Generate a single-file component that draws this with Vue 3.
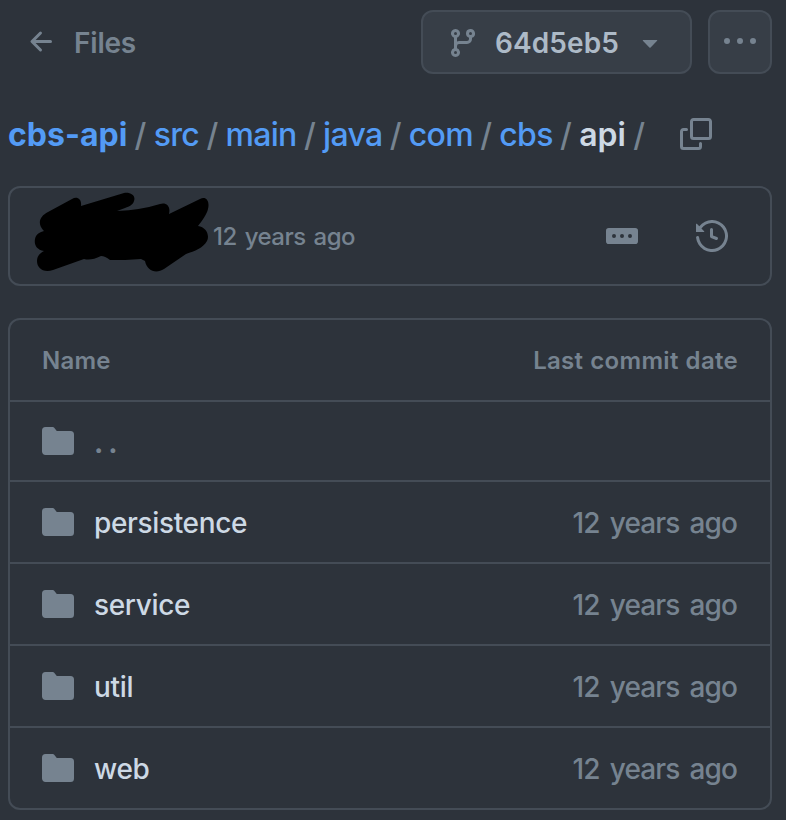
<script setup>
const crumbs = [
  { name: 'cbs-api', kind: 'root' },
  { name: 'src', kind: 'link' },
  { name: 'main', kind: 'link' },
  { name: 'java', kind: 'link' },
  { name: 'com', kind: 'link' },
  { name: 'cbs', kind: 'link' },
  { name: 'api', kind: 'current' },
]

const folders = [
  { name: 'persistence', date: '12 years ago' },
  { name: 'service', date: '12 years ago' },
  { name: 'util', date: '12 years ago' },
  { name: 'web', date: '12 years ago' },
]

const folderPath =
  'M1.75 1A1.75 1.75 0 0 0 0 2.75v10.5C0 14.216.784 15 1.75 15h12.5A1.75 1.75 0 0 0 16 13.25v-8.5A1.75 1.75 0 0 0 14.25 3H7.5a.25.25 0 0 1-.2-.1l-.9-1.2C6.07 1.26 5.55 1 5 1H1.75Z'
</script>

<template>
  <main class="page">
    <header class="topbar">
      <a class="files">
        <svg class="icon" viewBox="0 0 16 16"><path d="M7.78 12.53a.75.75 0 0 1-1.06 0L2.47 8.28a.75.75 0 0 1 0-1.06l4.25-4.25a.751.751 0 0 1 1.042.018.751.751 0 0 1 .018 1.042L4.81 7h7.44a.75.75 0 0 1 0 1.5H4.81l2.97 2.97a.75.75 0 0 1 0 1.06Z" /></svg>
        <span class="files-label">Files</span>
      </a>
      <button class="btn branch">
        <svg class="icon branch-icon" viewBox="0 0 16 16"><path d="M9.5 3.25a2.25 2.25 0 1 1 3 2.122V6A2.5 2.5 0 0 1 10 8.5H6a1 1 0 0 0-1 1v1.128a2.251 2.251 0 1 1-1.5 0V5.372a2.25 2.25 0 1 1 1.5 0v1.836A2.493 2.493 0 0 1 6 7h4a1 1 0 0 0 1-1v-.628A2.25 2.25 0 0 1 9.5 3.25Zm-6 0a.75.75 0 1 0 1.5 0 .75.75 0 0 0-1.5 0Zm8.25-.75a.75.75 0 1 0 0 1.5.75.75 0 0 0 0-1.5ZM4.25 12a.75.75 0 1 0 0 1.5.75.75 0 0 0 0-1.5Z" /></svg>
        <span class="sha">64d5eb5</span>
        <svg class="icon" viewBox="0 0 16 16"><path d="m4.427 7.427 3.396 3.396a.25.25 0 0 0 .354 0l3.396-3.396A.25.25 0 0 0 11.396 7H4.604a.25.25 0 0 0-.177.427Z" /></svg>
      </button>
      <button class="btn more">
        <svg class="icon" viewBox="0 0 16 16"><path d="M8 9a1.5 1.5 0 1 0 0-3 1.5 1.5 0 0 0 0 3ZM1.5 9a1.5 1.5 0 1 0 0-3 1.5 1.5 0 0 0 0 3Zm13 0a1.5 1.5 0 1 0 0-3 1.5 1.5 0 0 0 0 3Z" /></svg>
      </button>
    </header>

    <nav class="crumbs">
      <template v-for="c in crumbs" :key="c.name">
        <span class="crumb" :class="c.kind">{{ c.name }}</span>
        <span class="sep">/</span>
      </template>
      <svg class="icon copy" viewBox="0 0 16 16">
        <path d="M0 6.75C0 5.784.784 5 1.75 5h1.5a.75.75 0 0 1 0 1.5h-1.5a.25.25 0 0 0-.25.25v7.5c0 .138.112.25.25.25h7.5a.25.25 0 0 0 .25-.25v-1.5a.75.75 0 0 1 1.5 0v1.5A1.75 1.75 0 0 1 9.25 16h-7.5A1.75 1.75 0 0 1 0 14.25Z" />
        <path d="M5 1.75C5 .784 5.784 0 6.75 0h7.5C15.216 0 16 .784 16 1.75v7.5A1.75 1.75 0 0 1 14.25 11h-7.5A1.75 1.75 0 0 1 5 9.25Zm1.75-.25a.25.25 0 0 0-.25.25v7.5c0 .138.112.25.25.25h7.5a.25.25 0 0 0 .25-.25v-7.5a.25.25 0 0 0-.25-.25Z" />
      </svg>
    </nav>

    <section class="commit">
      <svg class="scribble" viewBox="0 0 180 90">
        <path d="M14 36 C8 29 11 22 19 18 L43 5 C48 2 53 5 52 12 L95 -1 C102 -2 107 2 105 7 C104 11 99 13 96 14 L88 17 Q112 16 131 10 C137 8 142 12 140 20 L171 5 C177 2 181 7 179 15 C178 20 173 27 169 32 C177 33 181 41 178 47 C174 54 166 57 157 60 L135 75 C127 80 118 77 116 67 L112 65 C102 66 90 66 81 66 Q76 62 72 62 Q62 67 55 65 L24 76 C14 79 8 74 8 67 C8 62 11 59 15 57 C7 56 5 50 6 45 C7 40 11 38 15 37Z" />
      </svg>
      <span class="when">12 years ago</span>
      <svg class="icon ellipsis" viewBox="0 0 16 16"><path d="M0 5.4A1.4 1.4 0 0 1 1.4 4h13.2A1.4 1.4 0 0 1 16 5.4v5.2a1.4 1.4 0 0 1-1.4 1.4H1.4A1.4 1.4 0 0 1 0 10.6ZM12 7a1 1 0 1 0 0 2 1 1 0 0 0 0-2ZM7 8a1 1 0 1 0 2 0 1 1 0 0 0-2 0ZM4 7a1 1 0 1 0 0 2 1 1 0 0 0 0-2Z" /></svg>
      <svg class="icon" viewBox="0 0 16 16"><path d="m.427 1.927 1.215 1.215a8.002 8.002 0 1 1-1.6 5.685.75.75 0 1 1 1.493-.154 6.5 6.5 0 1 0 1.18-4.458l1.358 1.358A.25.25 0 0 1 3.896 6H.25A.25.25 0 0 1 0 5.75V2.104a.25.25 0 0 1 .427-.177ZM7.75 4a.75.75 0 0 1 .75.75v2.992l2.028.812a.75.75 0 0 1-.557 1.392l-2.5-1A.751.751 0 0 1 7 8.25v-3.5A.75.75 0 0 1 7.75 4Z" /></svg>
    </section>

    <section class="table">
      <div class="row head">
        <span class="head-name">Name</span>
        <span class="head-date">Last commit date</span>
      </div>
      <div class="row parent">
        <svg class="icon" viewBox="0 0 16 16"><path :d="folderPath" /></svg>
        <span class="dots">..</span>
      </div>
      <div v-for="f in folders" :key="f.name" class="row">
        <svg class="icon" viewBox="0 0 16 16"><path :d="folderPath" /></svg>
        <span class="name">{{ f.name }}</span>
        <span class="date">{{ f.date }}</span>
      </div>
    </section>
  </main>
</template>

<style>
body {
  background: #2d333b;
}
</style>

<style scoped>
.page {
  box-sizing: border-box;
  height: 820px;
  padding: 10px 14px 10px 8px;
  display: flex;
  flex-direction: column;
  background: #2d333b;
  color: #768390;
  font-family: Inter, "Noto Sans", sans-serif;
  font-size: 28px;
  font-weight: 450;
}
.icon {
  display: block;
  flex: none;
  width: 32px;
  height: 32px;
  fill: #768390;
}
.topbar {
  display: flex;
  height: 64px;
}
.files {
  flex: 1;
  display: flex;
  padding: 16px 0 0 18px;
  gap: 16px;
  line-height: 34px;
  font-weight: 600;
}
.files-label {
  letter-spacing: -0.2px;
}
.btn {
  box-sizing: border-box;
  display: flex;
  height: 64px;
  border: 2px solid #444c56;
  border-radius: 12px;
  background: #373e47;
  font: inherit;
  padding: 14px;
}
.branch {
  width: 271px;
  padding-left: 24px;
}
.branch-icon {
  margin-top: 1px;
}
.sha {
  width: 139px;
  margin: 0 0 0 16px;
  text-align: left;
  line-height: 34px;
  font-weight: 600;
  letter-spacing: 0.1px;
  color: #adbac7;
}
.more {
  width: 64px;
  margin-left: 16px;
}
.crumbs {
  display: flex;
  height: 32px;
  margin-top: 44px;
  font-size: 32px;
  line-height: 34px;
}
.crumb {
  color: #539bf5;
}
.link {
  letter-spacing: -0.7px;
}
.root {
  font-weight: 650;
}
.current {
  font-weight: 600;
  color: #cdd9e5;
}
.sep {
  padding: 0 7.3px;
}
.copy {
  margin-left: auto;
  margin-right: 60px;
}
.commit {
  box-sizing: border-box;
  display: flex;
  align-items: center;
  height: 100px;
  margin-top: 36px;
  padding: 0 42px 0 19px;
  border: 2px solid #444c56;
  border-radius: 12px;
  font-size: 24px;
}
.scribble {
  flex: none;
  width: 180px;
  height: 90px;
  margin-top: 6px;
  overflow: visible;
}
.when {
  flex: 1;
  margin-left: 4px;
  padding-top: 1px;
  letter-spacing: -0.5px;
  word-spacing: 2px;
}
.ellipsis {
  margin-right: 58px;
}
.table {
  margin-top: 32px;
  border: 2px solid #444c56;
  border-radius: 12px;
}
.row {
  display: flex;
  align-items: center;
  height: 80px;
  padding: 0 32px;
  border-bottom: 2px solid #444c56;
}
.row:last-child {
  border-bottom: 0;
}
.head {
  justify-content: space-between;
  font-size: 24px;
  font-weight: 600;
}
.head-name {
  letter-spacing: 0.2px;
}
.head-date {
  letter-spacing: 0.3px;
  word-spacing: 0.6px;
}
.parent {
  height: 78px;
}
.dots {
  margin-left: 20px;
  padding-top: 3px;
  letter-spacing: 5px;
  font-weight: 700;
}
.name {
  flex: 1;
  margin-left: 20px;
  padding-top: 2px;
  letter-spacing: -0.35px;
  color: #cdd9e5;
}
.date {
  margin-right: 1px;
  padding-top: 2px;
  letter-spacing: -0.9px;
  word-spacing: 3.6px;
}
</style>
